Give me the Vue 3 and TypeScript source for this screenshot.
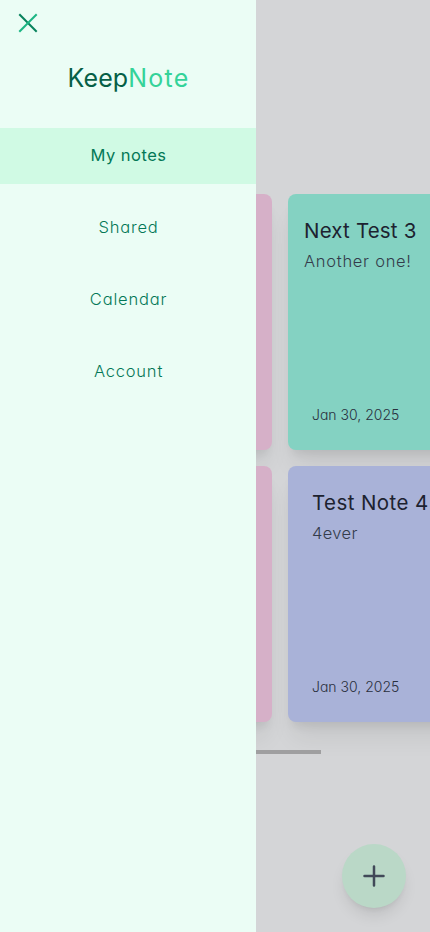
<script setup lang="ts">
interface Note {
  id: number
  title: string
  body: string
  date: string
  tone: string
  inset?: boolean
}

const links: string[] = ['My notes', 'Shared', 'Calendar', 'Account']
const active = 'My notes'

const notes: Note[] = [
  { id: 1, title: '', body: '', date: '', tone: 'pink' },
  { id: 2, title: 'Next Test 3', body: 'Another one!', date: 'Jan 30, 2025', tone: 'teal' },
  { id: 3, title: '', body: '', date: '', tone: 'pink' },
  { id: 4, title: 'Test Note 4', body: '4ever', date: 'Jan 30, 2025', tone: 'blue', inset: true },
]
</script>

<template>
  <div class="app">
    <main class="board">
      <div class="grid">
        <article v-for="note in notes" :key="note.id" class="card" :class="[note.tone, { inset: note.inset }]">
          <div>
            <h2 class="title">{{ note.title }}</h2>
            <p class="body">{{ note.body }}</p>
          </div>
          <time class="date">{{ note.date }}</time>
        </article>
      </div>
      <div class="scrollbar"></div>
    </main>

    <button class="fab" aria-label="Add note">
      <svg width="24" height="24" viewBox="0 0 24 24" fill="none" stroke="#414958" stroke-width="2.5" stroke-linecap="round">
        <path d="M12 2.5v19M2.5 12h19" />
      </svg>
    </button>

    <aside class="drawer">
      <button class="close" aria-label="Close menu">
        <svg width="24" height="24" viewBox="0 0 24 24" fill="none" stroke-width="2">
          <path d="M3.3 3.3l17.4 17.4" stroke="#07825c" />
          <path d="M20.7 3.3L3.3 20.7" stroke="#1bb583" />
        </svg>
      </button>
      <h1 class="logo"><span class="keep">Keep</span><span class="note">Note</span></h1>
      <nav class="nav">
        <a v-for="link in links" :key="link" class="link" :class="{ active: link === active }">{{ link }}</a>
      </nav>
    </aside>
  </div>
</template>

<style>
body {
  background: #d4d5d7;
}
</style>

<style scoped>
.app {
  position: relative;
  height: 932px;
  overflow: hidden;
  background: #d4d5d7;
  font-family: Inter, 'Liberation Sans', sans-serif;
  font-feature-settings: 'cv11';
}
button {
  border: 0;
  padding: 0;
  background: none;
}
h1,
h2,
p {
  margin: 0;
}
.board {
  padding: 194px 0 0 16px;
}
.grid {
  display: grid;
  grid-template-columns: 256px 256px;
  gap: 16px;
}
.card {
  box-sizing: border-box;
  display: flex;
  flex-direction: column;
  justify-content: space-between;
  height: 256px;
  padding: 21px 16px 23px;
  border-radius: 8px;
  box-shadow: 0 20px 25px -5px rgba(0, 0, 0, 0.07), 0 8px 10px -4px rgba(0, 0, 0, 0.08);
  white-space: nowrap;
}
.inset {
  padding-left: 24px;
}
.pink {
  background: #d6b0c8;
}
.teal {
  background: #84d2c2;
}
.blue {
  background: #a9b2d8;
}
.title {
  font-size: 20.5px;
  line-height: 32px;
  font-weight: 400;
  letter-spacing: 0.18px;
  color: #1d2230;
}
.inset .title {
  letter-spacing: 0.42px;
}
.body {
  font-size: 16.5px;
  line-height: 29px;
  font-weight: 300;
  letter-spacing: 0.72px;
  color: #343c4b;
}
.inset .body {
  letter-spacing: 0.35px;
}
.date {
  padding-left: 8px;
  font-size: 14px;
  line-height: 24px;
  font-weight: 300;
  color: #29303e;
}
.inset .date {
  padding-left: 0;
}
.scrollbar {
  position: relative;
  width: 305px;
  height: 4px;
  margin-top: 28px;
  background: #9f9fa0;
}
.fab {
  position: absolute;
  right: 24px;
  bottom: 24px;
  display: flex;
  align-items: center;
  justify-content: center;
  width: 64px;
  height: 64px;
  border-radius: 50%;
  background: #bad8c7;
  box-shadow: 0 10px 15px -3px rgba(0, 0, 0, 0.1), 0 4px 6px -4px rgba(0, 0, 0, 0.1);
}
.drawer {
  position: absolute;
  top: 0;
  left: 0;
  box-sizing: border-box;
  width: 256px;
  height: 100%;
  padding-top: 11px;
  background: #ebfdf5;
}
.close {
  display: block;
  width: 24px;
  height: 24px;
  margin-left: 16px;
}
.close svg {
  display: block;
}
.logo {
  height: 65px;
  margin-top: 28px;
  padding-left: 1px;
  font-size: 25px;
  line-height: 31px;
  font-weight: 400;
  text-align: center;
}
.keep {
  letter-spacing: 0.1px;
  color: #065f46;
}
.note {
  letter-spacing: 1.2px;
  color: #34d399;
}
.nav {
  display: flex;
  flex-direction: column;
  gap: 16px;
}
.link {
  height: 56px;
  padding-left: 1px;
  line-height: 55px;
  font-size: 16.5px;
  font-weight: 300;
  letter-spacing: 0.8px;
  text-align: center;
  color: #047857;
}
.active {
  background: #d0fae4;
  font-weight: 400;
  letter-spacing: 0.5px;
}
</style>
